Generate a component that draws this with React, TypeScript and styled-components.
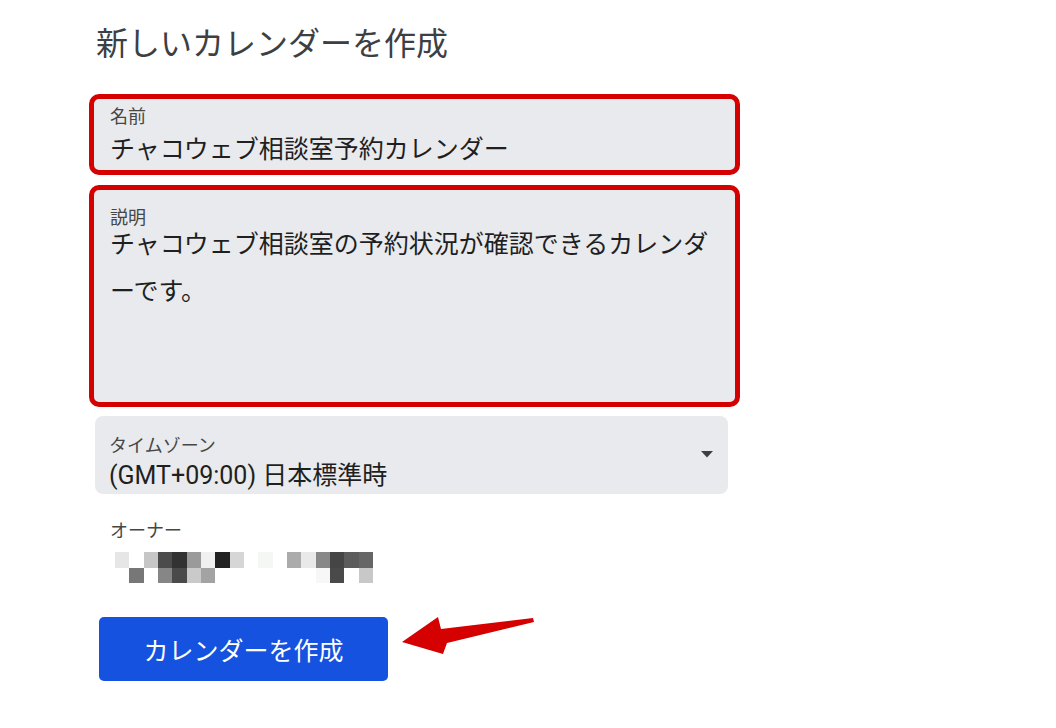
import React from 'react'
import styled, { createGlobalStyle } from 'styled-components'

const GlobalStyle = createGlobalStyle`
  html, body {
    margin: 0;
    padding: 0;
    background: #ffffff;
  }
  body {
    font-family: Roboto, "Noto Sans CJK JP", "Noto Sans", sans-serif;
    color: #202124;
  }
`

const Page = styled.div`
  width: 1056px;
  height: 728px;
  padding: 24px 0 0 89px;
  box-sizing: border-box;
  overflow: hidden;
`

const Form = styled.div`
  display: flex;
  flex-direction: column;
  width: 651px;
`

const Title = styled.h1`
  margin: 0 0 30px 7px;
  font-size: 32px;
  line-height: 40px;
  font-weight: 400;
  color: #3c4043;
`

interface BoxProps {
  $highlighted?: boolean
}

const FieldBox = styled.div<BoxProps>`
  display: flex;
  flex-direction: column;
  box-sizing: border-box;
  background: #e8eaed;
  border: ${p => (p.$highlighted ? '5px solid #d50000' : 'none')};
  border-radius: 10px;
`

const NameBox = styled(FieldBox)`
  height: 81px;
  padding: 7px 10px 0 16px;
`

const DescriptionBox = styled(FieldBox)`
  height: 222px;
  margin-top: 10px;
  padding: 17px 10px 0 16px;
`

const SelectBox = styled(FieldBox)`
  position: relative;
  width: 633px;
  height: 78px;
  margin: 9px 0 0 6px;
  padding: 19px 40px 0 14px;
  border-radius: 8px;
`

const FieldLabel = styled.div`
  font-size: 18px;
  line-height: 21px;
  color: #444746;
`

const SelectLabel = styled(FieldLabel)`
  line-height: 22px;
`

const FieldValue = styled.div`
  margin-top: 3px;
  font-size: 25px;
  line-height: 39px;
  color: #1f1f1f;
  white-space: nowrap;
`

const SelectValue = styled(FieldValue)`
  margin-top: 3px;
  line-height: 31px;
`

const DescriptionText = styled.div`
  width: 615px;
  margin-top: -7px;
  font-size: 25px;
  line-height: 47px;
  color: #1f1f1f;
  line-break: loose;
  word-break: break-all;
`

const Caret = styled.svg`
  position: absolute;
  right: 15px;
  top: 35px;
`

const Owner = styled.div`
  display: flex;
  flex-direction: column;
  margin: 25px 0 0 21px;
`

const OwnerLabel = styled.div`
  font-size: 18px;
  line-height: 24px;
  color: #444746;
`

const Mosaic = styled.svg`
  display: block;
  margin: 9px 0 0 5px;
`

const ButtonRow = styled.div`
  display: flex;
  align-items: flex-start;
  margin: 34px 0 0 10px;
`

const PrimaryButton = styled.button`
  width: 289px;
  height: 64px;
  border: none;
  border-radius: 5px;
  background: #1552e0;
  color: #ffffff;
  font-family: Roboto, "Noto Sans CJK JP", sans-serif;
  font-size: 25px;
  cursor: pointer;
`

const Arrow = styled.svg`
  margin: -8px 0 0 7px;
`

const mosaicRows: (string | null)[][] = [
  ['#e6e6e6', null, '#c6c6c6', '#4b4b4b', '#323232', '#9a9a9a', '#f0f0f0', '#222222', '#d6d6d6', null, '#f4f7f4', null, '#ababab', '#e9e9e9', '#888888', '#454545', '#5c5c5c', '#666666'],
  [null, '#777777', null, '#868686', '#4a4a4a', '#cacaca', '#a3a3a3', null, null, null, null, null, null, null, '#f7f7f7', '#4a4a4a', null, '#c8c8c8'],
]

const App: React.FC = () => (
  <Page>
    <GlobalStyle />
    <Form>
      <Title>新しいカレンダーを作成</Title>

      <NameBox $highlighted>
        <FieldLabel>名前</FieldLabel>
        <FieldValue>チャコウェブ相談室予約カレンダー</FieldValue>
      </NameBox>

      <DescriptionBox $highlighted>
        <FieldLabel>説明</FieldLabel>
        <DescriptionText>チャコウェブ相談室の予約状況が確認できるカレンダーです。</DescriptionText>
      </DescriptionBox>

      <SelectBox>
        <SelectLabel>タイムゾーン</SelectLabel>
        <SelectValue>(GMT+09:00) 日本標準時</SelectValue>
        <Caret width="12" height="7" viewBox="0 0 12 7">
          <path d="M0 0h12L6 6.5z" fill="#3c4043" />
        </Caret>
      </SelectBox>

      <Owner>
        <OwnerLabel>オーナー</OwnerLabel>
        <Mosaic width="258" height="31" viewBox="0 0 18 2" preserveAspectRatio="none" shapeRendering="crispEdges">
          {mosaicRows.map((row, y) =>
            row.map((c, x) => (c ? <rect key={`${x}-${y}`} x={x} y={y} width="1" height="1" fill={c} /> : null))
          )}
        </Mosaic>
      </Owner>

      <ButtonRow>
        <PrimaryButton>カレンダーを作成</PrimaryButton>
        <Arrow width="145" height="50" viewBox="0 0 145 50">
          <polygon points="7,33 43,8 46,20 138,9 139,13 52,34 48,45" fill="#d50000" />
        </Arrow>
      </ButtonRow>
    </Form>
  </Page>
)

export default App
